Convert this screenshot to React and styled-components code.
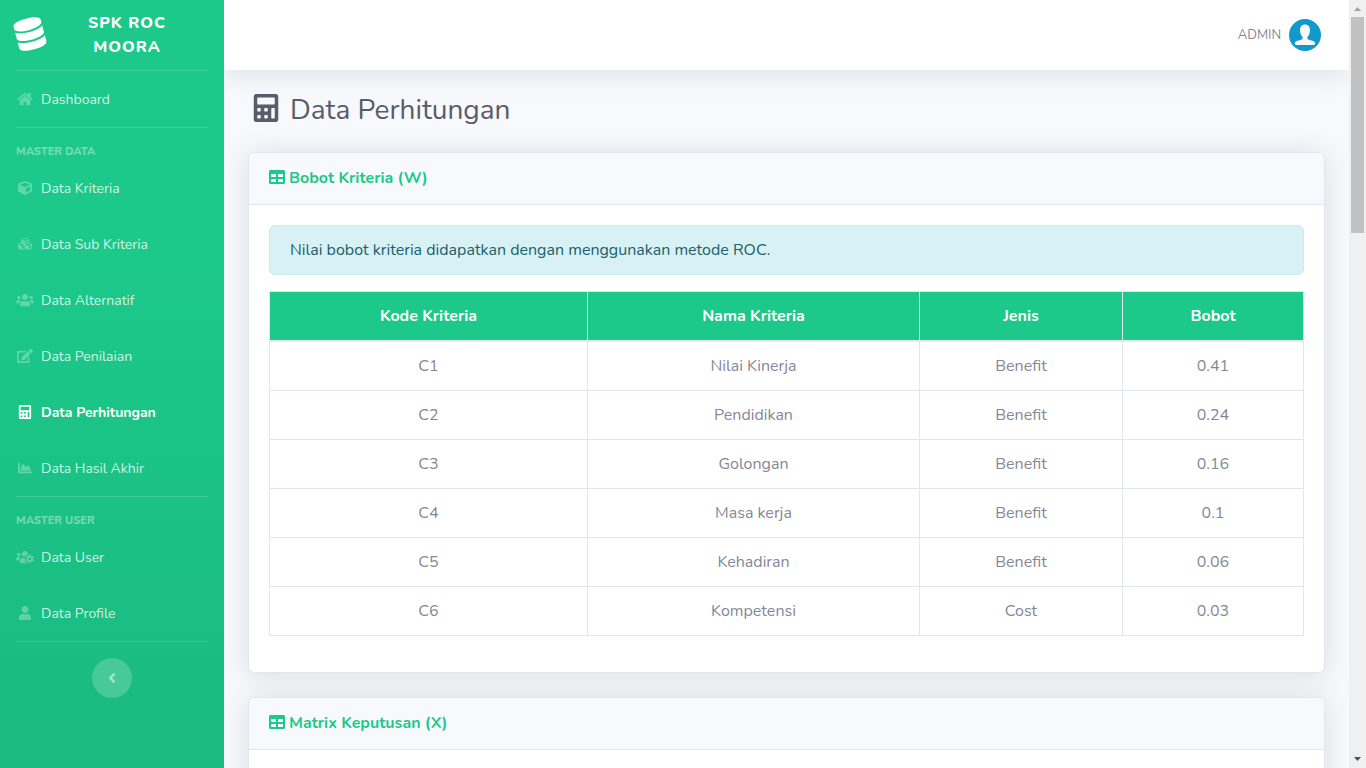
import React from "react";
import styled, { createGlobalStyle } from "styled-components";
import {
    FaAngleLeft,
    FaCalculator,
    FaChartArea,
    FaCube,
    FaCubes,
    FaDatabase,
    FaEdit,
    FaHome,
    FaTable,
    FaUser,
    FaUsers,
    FaUsersCog,
} from "react-icons/fa";

const masterData = [
    { label: "Data Kriteria", icon: FaCube },
    { label: "Data Sub Kriteria", icon: FaCubes },
    { label: "Data Alternatif", icon: FaUsers },
    { label: "Data Penilaian", icon: FaEdit },
    { label: "Data Perhitungan", icon: FaCalculator, active: true },
    { label: "Data Hasil Akhir", icon: FaChartArea },
];

const masterUser = [
    { label: "Data User", icon: FaUsersCog },
    { label: "Data Profile", icon: FaUser },
];

const kriteria = [
    { kode: "C1", nama: "Nilai Kinerja", jenis: "Benefit", bobot: "0.41" },
    { kode: "C2", nama: "Pendidikan", jenis: "Benefit", bobot: "0.24" },
    { kode: "C3", nama: "Golongan", jenis: "Benefit", bobot: "0.16" },
    { kode: "C4", nama: "Masa kerja", jenis: "Benefit", bobot: "0.1" },
    { kode: "C5", nama: "Kehadiran", jenis: "Benefit", bobot: "0.06" },
    { kode: "C6", nama: "Kompetensi", jenis: "Cost", bobot: "0.03" },
];

const NavItem = ({ label, icon: Icon, active }) => {
    return (
        <li>
            <NavLink href="#" $active={active}>
                <NavIcon $active={active}><Icon /></NavIcon>
                {label}
            </NavLink>
        </li>
    )
}

const Sidebar = () => {
    return (
        <SidebarStyled>
            <Brand href="#">
                <BrandIcon><FaDatabase /></BrandIcon>
                <BrandText>SPK ROC MOORA</BrandText>
            </Brand>
            <Divider />
            <NavList>
                <NavItem label="Dashboard" icon={FaHome} />
            </NavList>
            <Divider />
            <NavHeading>Master Data</NavHeading>
            <NavList>
                {masterData.map((item) => <NavItem key={item.label} {...item} />)}
            </NavList>
            <Divider />
            <NavHeading>Master User</NavHeading>
            <NavList>
                {masterUser.map((item) => <NavItem key={item.label} {...item} />)}
            </NavList>
            <Divider />
            <ToggleButton type="button" aria-label="Toggle sidebar"><FaAngleLeft /></ToggleButton>
        </SidebarStyled>
    )
}

const Topbar = () => {
    return (
        <TopbarStyled>
            <UserLink href="#">
                ADMIN
                <Avatar viewBox="0 0 32 32" aria-hidden="true">
                    <circle cx="16" cy="16" r="16" fill="#1099cb" />
                    <path
                        fill="#faf7f7"
                        d="M16 5.6c3.3 0 5 2.4 5 5.6 0 2.5-.9 4.9-2.2 6.2-.7.8-.6 2.6.5 3.1 2.5 1 6.7 1.1 6.9 3.9 0 1.2-1 1.7-2.2 1.7H8c-1.2 0-2.2-.5-2.2-1.7.2-2.8 4.4-2.9 6.9-3.9 1.1-.5 1.2-2.3.5-3.1-1.3-1.3-2.2-3.7-2.2-6.2 0-3.2 1.7-5.6 5-5.6z"
                    />
                </Avatar>
            </UserLink>
        </TopbarStyled>
    )
}

const ScrollTrack = () => {
    return (
        <ScrollTrackStyled aria-hidden="true">
            <ScrollArrow viewBox="0 0 17 17"><path fill="#a3a3a3" d="M5 11h7L8.5 7z" /></ScrollArrow>
            <ScrollLane><ScrollThumb /></ScrollLane>
            <ScrollArrow viewBox="0 0 17 17"><path fill="#505050" d="M5 6h7l-3.5 4z" /></ScrollArrow>
        </ScrollTrackStyled>
    )
}

const App = () => {
    return (
        <Wrapper>
            <GlobalStyle />
            <ScrollArea>
                <Sidebar />
                <ContentWrapper>
                    <Topbar />
                    <Content>
                        <PageTitle>
                            <TitleIcon><FaCalculator /></TitleIcon>
                            Data Perhitungan
                        </PageTitle>
                        <Card>
                            <CardHeader><CardIcon><FaTable /></CardIcon>Bobot Kriteria (W)</CardHeader>
                            <CardBody>
                                <Alert>Nilai bobot kriteria didapatkan dengan menggunakan metode ROC.</Alert>
                                <Table>
                                    <colgroup>
                                        <Col $width={318} />
                                        <Col $width={332} />
                                        <Col $width={203} />
                                        <Col $width={181} />
                                    </colgroup>
                                    <thead>
                                        <tr>
                                            <th>Kode Kriteria</th>
                                            <th>Nama Kriteria</th>
                                            <th>Jenis</th>
                                            <th>Bobot</th>
                                        </tr>
                                    </thead>
                                    <tbody>
                                        {kriteria.map((row) => (
                                            <tr key={row.kode}>
                                                <td>{row.kode}</td>
                                                <td>{row.nama}</td>
                                                <td>{row.jenis}</td>
                                                <td>{row.bobot}</td>
                                            </tr>
                                        ))}
                                    </tbody>
                                </Table>
                            </CardBody>
                        </Card>
                        <Card>
                            <CardHeader><CardIcon><FaTable /></CardIcon>Matrix Keputusan (X)</CardHeader>
                            <CardBody />
                        </Card>
                    </Content>
                </ContentWrapper>
            </ScrollArea>
            <ScrollTrack />
        </Wrapper>
    )
}

const GlobalStyle = createGlobalStyle`
    *{
        box-sizing: border-box;
    }
    body{
        margin: 0;
        font-family: Nunito, 'Open Sans', sans-serif;
        font-size: 16px;
        line-height: 24px;
        color: #858796;
        background-color: #fff;
    }
`;

const Wrapper = styled.div`
    display: flex;
    height: 100vh;
`;

const ScrollArea = styled.div`
    flex: 1;
    min-width: 0;
    display: flex;
    align-items: flex-start;
    overflow-y: auto;
    scrollbar-width: none;
    background-color: #f8f9fc;
`;

const SidebarStyled = styled.nav`
    flex: none;
    width: 224px;
    min-height: 100%;
    display: flex;
    flex-direction: column;
    align-self: stretch;
    background-color: #1cc88a;
    background-image: linear-gradient(180deg, #1cc88a 10%, #13855c 100%);
    background-size: 100% 2610px;
`;

const Brand = styled.a`
    height: 70px;
    padding: 0 16px 2px 12px;
    display: flex;
    align-items: center;
    color: #fff;
    text-decoration: none;
`;

const BrandIcon = styled.span`
    display: flex;
    font-size: 32px;
    padding: 0 2px;
    transform: rotate(-15deg);
`;

const BrandText = styled.span`
    flex: 1;
    padding: 2px 32px 0 30px;
    font-weight: 800;
    letter-spacing: 1px;
    text-align: center;
    text-transform: uppercase;
`;

const Divider = styled.hr`
    width: calc(100% - 32px);
    margin: 0 16px;
    border: 0;
    border-top: 1px solid rgba(255, 255, 255, 0.15);
`;

const NavHeading = styled.div`
    padding: 16px 16px 0;
    font-size: 11px;
    line-height: 16px;
    font-weight: 800;
    text-transform: uppercase;
    color: rgba(255, 255, 255, 0.4);
`;

const NavList = styled.ul`
    margin: 0;
    padding: 0;
    list-style: none;
`;

const NavLink = styled.a`
    display: flex;
    align-items: center;
    gap: 7px;
    padding: 17px 16px 15px;
    font-size: 14px;
    font-weight: ${(props) => (props.$active ? 700 : 400)};
    color: ${(props) => (props.$active ? "#fff" : "rgba(255, 255, 255, 0.8)")};
    text-decoration: none;

    &:hover{
        color: #fff;
    }
`;

const NavIcon = styled.span`
    display: flex;
    padding-bottom: 2px;
    color: ${(props) => (props.$active ? "#fff" : "rgba(255, 255, 255, 0.3)")};

    svg{
        width: 18px;
        height: 14px;
    }
`;

const ToggleButton = styled.button`
    width: 40px;
    height: 40px;
    margin: 16px auto;
    padding: 0;
    display: flex;
    align-items: center;
    justify-content: center;
    border: none;
    border-radius: 50%;
    font-size: 16px;
    color: rgba(255, 255, 255, 0.5);
    background-color: rgba(255, 255, 255, 0.2);
    cursor: pointer;
`;

const ContentWrapper = styled.div`
    flex: 1;
    min-width: 0;
    overflow-x: hidden;
`;

const TopbarStyled = styled.header`
    height: 70px;
    padding: 0 28px;
    display: flex;
    align-items: center;
    justify-content: flex-end;
    background-color: #fff;
    box-shadow: 0 2px 28px rgba(58, 59, 69, 0.15);
`;

const UserLink = styled.a`
    display: flex;
    align-items: center;
    gap: 8px;
    font-size: 13px;
    color: #858796;
    text-decoration: none;
`;

const Avatar = styled.svg`
    width: 32px;
    height: 32px;
`;

const Content = styled.main`
    padding: 24px;
`;

const PageTitle = styled.h1`
    margin: 0 0 26px;
    display: flex;
    align-items: center;
    gap: 7px;
    font-size: 28px;
    line-height: 32px;
    font-weight: 400;
    color: #5a5c69;
`;

const TitleIcon = styled.span`
    width: 35px;
    padding-bottom: 4px;
    display: flex;
    justify-content: center;
`;

const Card = styled.section`
    margin-bottom: 24px;
    border: 1px solid #e3e6f0;
    border-radius: 6px;
    background-color: #fff;
    box-shadow: 0 2px 28px rgba(58, 59, 69, 0.15);
`;

const CardHeader = styled.h2`
    margin: 0;
    padding: 16px 20px;
    display: flex;
    align-items: center;
    gap: 4px;
    border-bottom: 1px solid #e3e6f0;
    border-radius: 5px 5px 0 0;
    font-size: 16px;
    line-height: 19px;
    font-weight: 700;
    color: #1cc88a;
    background-color: #f8f9fc;
`;

const CardIcon = styled.span`
    display: flex;
    padding-bottom: 3px;
`;

const CardBody = styled.div`
    min-height: 56px;
    padding: 20px;
`;

const Alert = styled.div`
    margin-bottom: 16px;
    padding: 12px 20px;
    border: 1px solid #c7ebf1;
    border-radius: 6px;
    color: #1c606a;
    background-color: #d7f1f5;
`;

const Table = styled.table`
    width: 100%;
    margin-bottom: 16px;
    table-layout: fixed;
    border-collapse: collapse;
    text-align: center;

    th, td{
        padding: 12px;
        border: 1px solid #e3e6f0;
    }
    th{
        border-bottom-width: 2px;
        font-weight: 700;
        color: #fff;
        background-color: #1cc88a;
    }
`;

const Col = styled.col`
    width: ${(props) => props.$width}px;
`;

const ScrollTrackStyled = styled.div`
    flex: none;
    width: 17px;
    display: flex;
    flex-direction: column;
    background-color: #f0f0f0;
`;

const ScrollArrow = styled.svg`
    flex: none;
    width: 17px;
    height: 17px;
`;

const ScrollLane = styled.div`
    flex: 1;
    padding: 0 2px;
`;

const ScrollThumb = styled.div`
    height: 216px;
    background-color: #c1c1c1;
`;

export default App;
